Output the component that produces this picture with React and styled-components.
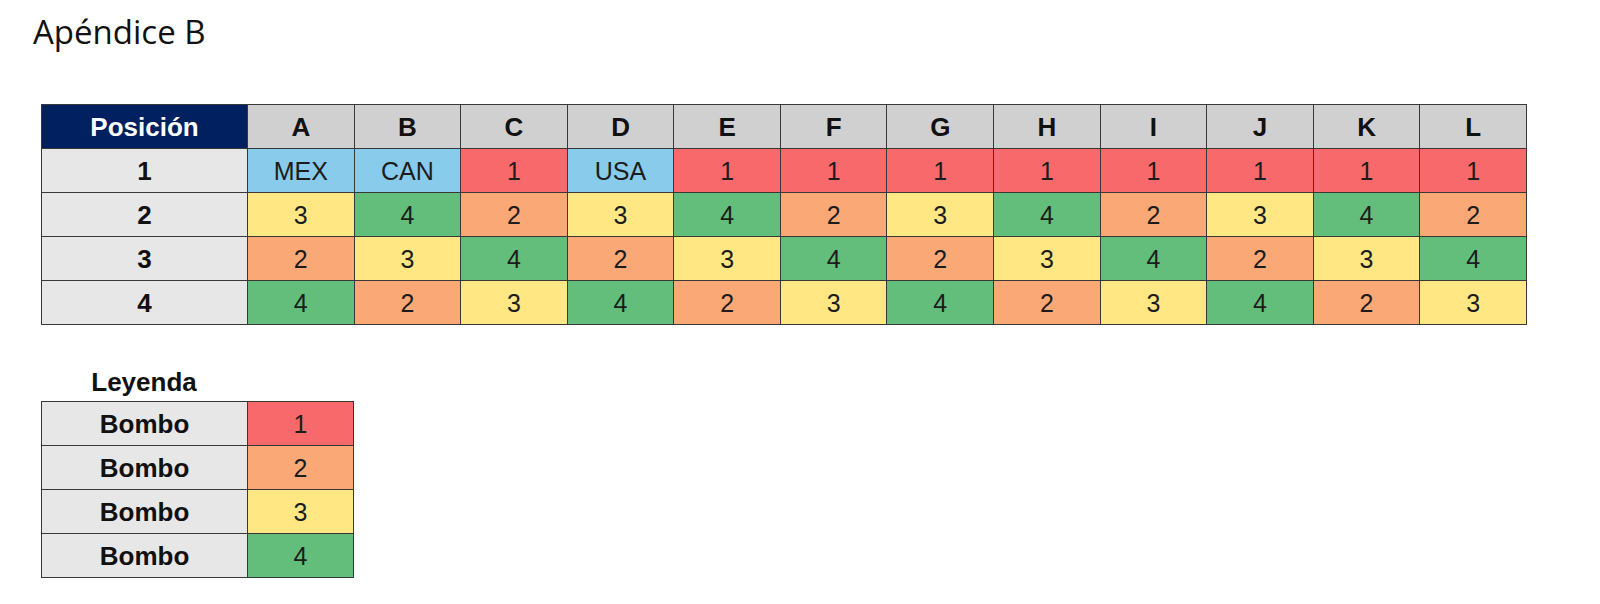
import React from 'react'
import styled, { createGlobalStyle } from 'styled-components'

const GlobalStyle = createGlobalStyle`
  body {
    margin: 0;
    background: #fff;
  }
`

const fills = {
  blue: '#88cbea',
  1: '#f8696b',
  2: '#fba877',
  3: '#ffe884',
  4: '#63be7b',
}

const Page = styled.div`
  padding: 13px 0 0 41px;
  font-family: 'Liberation Sans', Arial, sans-serif;
  color: #1c1c1c;
`

const Title = styled.h1`
  margin: 0 0 53px -8px;
  font-family: 'Open Sans', sans-serif;
  font-weight: 500;
  font-size: 33px;
  line-height: 38px;
  color: #111;
`

const Grid = styled.table`
  border-collapse: collapse;
  table-layout: fixed;
  width: ${(p) => p.width}px;
`

const Cell = styled.td`
  height: 43px;
  padding: 0;
  border: 1px solid #383838;
  text-align: center;
  vertical-align: middle;
  font-size: 25px;
  line-height: 28px;
  background: ${(p) => p.fill || '#fff'};
`

const HeadCell = styled(Cell).attrs({ as: 'th' })`
  font-weight: 700;
  font-size: 26px;
  color: ${(p) => (p.dark ? '#fff' : '#111')};
  background: ${(p) => (p.dark ? '#002060' : '#d0d0d0')};
`

const RowHead = styled(Cell)`
  font-weight: 700;
  font-size: 26px;
  color: #111;
  background: #e7e7e7;
`

const LegendTitle = styled.div`
  width: 206px;
  margin-top: 42px;
  margin-bottom: 4px;
  text-align: center;
  font-weight: 700;
  font-size: 26px;
  line-height: 30px;
  color: #111;
`

const letters = ['A', 'B', 'C', 'D', 'E', 'F', 'G', 'H', 'I', 'J', 'K', 'L']

const rows = [
  ['MEX', 'CAN', 1, 'USA', 1, 1, 1, 1, 1, 1, 1, 1],
  [3, 4, 2, 3, 4, 2, 3, 4, 2, 3, 4, 2],
  [2, 3, 4, 2, 3, 4, 2, 3, 4, 2, 3, 4],
  [4, 2, 3, 4, 2, 3, 4, 2, 3, 4, 2, 3],
]

function App() {
  return (
    <Page>
      <GlobalStyle />
      <Title>Apéndice B</Title>
      <Grid width={1486}>
        <colgroup>
          <col style={{ width: 206 }} />
          {letters.map((l) => (
            <col key={l} />
          ))}
        </colgroup>
        <thead>
          <tr>
            <HeadCell dark>Posición</HeadCell>
            {letters.map((l) => (
              <HeadCell key={l}>{l}</HeadCell>
            ))}
          </tr>
        </thead>
        <tbody>
          {rows.map((row, i) => (
            <tr key={i}>
              <RowHead>{i + 1}</RowHead>
              {row.map((v, j) => (
                <Cell key={j} fill={typeof v === 'string' ? fills.blue : fills[v]}>
                  {v}
                </Cell>
              ))}
            </tr>
          ))}
        </tbody>
      </Grid>

      <LegendTitle>Leyenda</LegendTitle>
      <Grid width={313}>
        <colgroup>
          <col style={{ width: 206 }} />
          <col />
        </colgroup>
        <tbody>
          {[1, 2, 3, 4].map((n) => (
            <tr key={n}>
              <RowHead>Bombo</RowHead>
              <Cell fill={fills[n]}>{n}</Cell>
            </tr>
          ))}
        </tbody>
      </Grid>
    </Page>
  )
}

export default App
